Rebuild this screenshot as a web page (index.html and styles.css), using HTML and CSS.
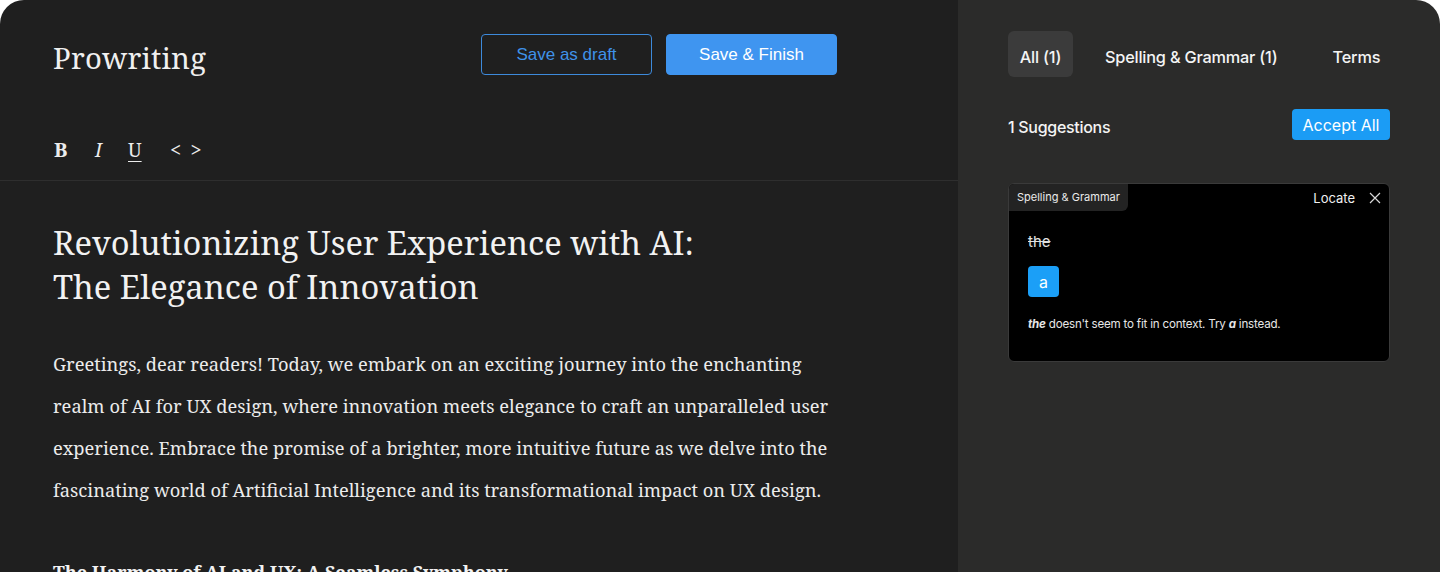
FILE: index.html
```html
<!DOCTYPE html>
<html>
<head>
<meta charset="utf-8">
<link rel="stylesheet" href="styles.css">
</head>
<body>
<div class="app">
  <main class="editor">
    <header class="topbar">
      <div class="logo">Prowriting</div>
      <div class="actions">
        <button class="btn btn-outline">Save as draft</button>
        <button class="btn btn-fill">Save &amp; Finish</button>
      </div>
    </header>
    <div class="toolbar">
      <span class="tool tool-b">B</span>
      <span class="tool tool-i">I</span>
      <span class="tool tool-u">U</span>
      <span class="tool tool-code">&lt; &gt;</span>
    </div>
    <article class="doc">
      <h1 class="doc-title">Revolutionizing User Experience with AI:<br>The Elegance of Innovation</h1>
      <p class="doc-text">Greetings, dear readers! Today, we embark on an exciting journey into the enchanting realm of AI for UX design, where innovation meets elegance to craft an unparalleled user experience. Embrace the promise of a brighter, more intuitive future as we delve into the fascinating world of Artificial Intelligence and its transformational impact on UX design.</p>
      <h2 class="doc-sub">The Harmony of AI and UX: A Seamless Symphony</h2>
    </article>
  </main>
  <aside class="panel">
    <nav class="tabs">
      <span class="tab active">All (1)</span>
      <span class="tab">Spelling &amp; Grammar (1)</span>
      <span class="tab">Terms</span>
    </nav>
    <div class="summary">
      <span class="count">1 Suggestions</span>
      <button class="accept">Accept All</button>
    </div>
    <div class="card">
      <div class="card-head">
        <span class="tag">Spelling &amp; Grammar</span>
        <div class="card-tools">
          <span class="locate">Locate</span>
          <svg class="close" width="12" height="12" viewBox="0 0 12 12"><path d="M1 1L11 11M11 1L1 11" stroke="#d8d8d8" stroke-width="1.2" fill="none"/></svg>
        </div>
      </div>
      <div class="card-body">
        <div class="old">the</div>
        <div class="new">a</div>
        <p class="note"><b><i>the</i></b> doesn't seem to fit in context. Try <b><i>a</i></b> instead.</p>
      </div>
    </div>
  </aside>
</div>
</body>
</html>
```

FILE: styles.css
```css
* { box-sizing: border-box; }
html, body { margin: 0; padding: 0; background: #ffffff; }
body { width: 1440px; height: 572px; overflow: hidden; }
.app {
  display: flex;
  height: 572px;
  border-radius: 24px 24px 0 0;
  overflow: hidden;
}
.editor {
  width: 958px;
  background: #1f1f1f;
  color: #f2f2f2;
  font-family: "Noto Serif", "DejaVu Serif", serif;
}
.topbar {
  display: flex;
  align-items: center;
  padding: 34px 121px 0 53px;
  height: 75px;
  justify-content: space-between;
}
.logo {
  font-size: 29.3px;
  letter-spacing: 0.2px;
  color: #f0f0f0;
  margin-top: 6px;
}
.actions { display: flex; gap: 14px; }
.btn {
  width: 171px;
  height: 41px;
  border-radius: 4px;
  font-family: "Liberation Sans", Arial, sans-serif;
  font-size: 17px;
  cursor: pointer;
}
.btn-outline { background: transparent; border: 1px solid #3d8adb; color: #3f92e8; }
.btn-fill { background: #3f95f0; border: 1px solid #3f95f0; color: #ffffff; }
.toolbar {
  display: flex;
  align-items: center;
  height: 106px;
  padding: 44px 0 0 53px;
  border-bottom: 1px solid #2e2e2e;
  font-size: 19px;
  color: #ececec;
}
.tool { display: inline-block; }
.tool-b { font-weight: bold; width: 42px; padding-left: 1px; font-size: 20px; }
.tool-i { font-style: italic; width: 33px; padding-left: 0; }
.tool-u { text-decoration: underline; text-decoration-thickness: 1px; text-underline-offset: 4px; width: 42px; }
.tool-code { letter-spacing: 2px; font-size: 20px; }
.doc { padding: 40px 53px 0 53px; }
.doc-title {
  margin: 0;
  font-size: 32.7px;
  font-weight: normal;
  line-height: 44px;
  color: #f2f2f2;
}
.doc-text {
  margin: 34px 0 0 0;
  font-size: 18.3px;
  line-height: 42px;
  color: #ececec;
  width: 790px;
}
.doc-sub {
  margin: 40px 0 0 0;
  font-size: 18px;
  font-weight: bold;
  line-height: 42px;
}
.panel {
  flex: 1;
  background: #2b2b2a;
  padding: 31px 50px 0 50px;
  font-family: Inter, "Liberation Sans", sans-serif;
  color: #f4f4f4;
}
.tabs { display: flex; align-items: center; height: 46px; }
.tab { font-size: 16.3px; font-weight: 500; letter-spacing: -0.2px; padding-top: 5px; }
.tab.active {
  background: #3b3b3b;
  border-radius: 6px;
  height: 46px;
  padding: 5px 10px 0 10px;
  display: flex;
  align-items: center;
  margin-right: 32px;
  width: 65px;
  justify-content: center;
}
.tab:nth-child(2) { margin-right: 55px; }
.summary {
  display: flex;
  justify-content: space-between;
  align-items: center;
  margin-top: 32px;
  height: 31px;
}
.count { font-size: 16px; font-weight: 500; letter-spacing: -0.3px; margin-top: 4px; }
.accept {
  background: #1b9cf5;
  border: none;
  border-radius: 4px;
  color: #ffffff;
  font-family: Inter, "Liberation Sans", sans-serif;
  font-size: 16px;
  height: 31px;
  width: 98px;
  padding: 0;
}
.card {
  margin-top: 43px;
  background: #000000;
  border: 1px solid #3a3a3a;
  border-radius: 6px;
  height: 179px;
  overflow: hidden;
}
.card-head { display: flex; justify-content: space-between; align-items: flex-start; }
.tag {
  background: #232323;
  font-size: 11px;
  color: #eaeaea;
  padding: 0 8px;
  height: 27px;
  line-height: 27px;
  border-radius: 0 0 6px 0;
}
.card-tools { display: flex; align-items: center; gap: 14px; height: 27px; padding-right: 8px; }
.locate { font-size: 13px; color: #f0f0f0; }
.close { display: block; }
.card-body { padding: 21px 19px 0 19px; }
.old {
  font-size: 15px;
  color: #e0e0e0;
  text-decoration: line-through;
  line-height: 20px;
}
.new {
  margin-top: 14px;
  width: 31px;
  height: 31px;
  border-radius: 4px;
  background: #1b9ff7;
  color: #fff;
  font-size: 16px;
  display: flex;
  align-items: center;
  justify-content: center;
}
.note { margin: 20px 0 0 0; font-size: 11.6px; color: #e6e6e6; letter-spacing: -0.2px; }
```
